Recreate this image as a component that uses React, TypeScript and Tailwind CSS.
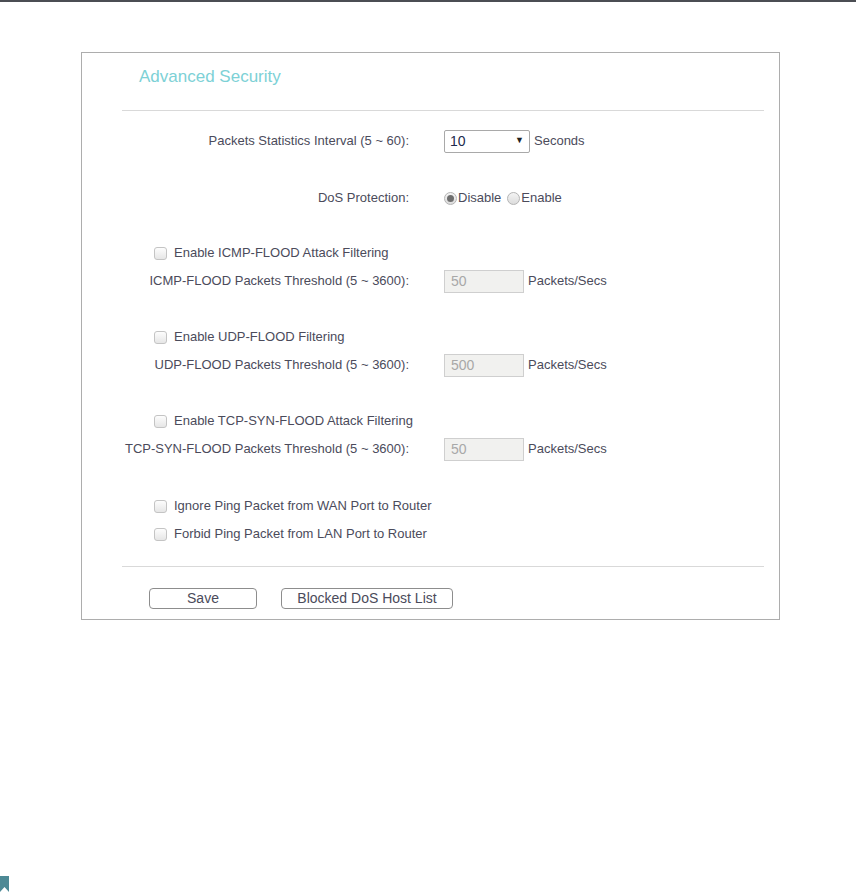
const FONT = { fontFamily: '"Liberation Sans", Arial, sans-serif' };

const Checkbox = () => (
  <span className="inline-block w-[13px] h-[13px] rounded-[3px] border border-[#c4c4c4] bg-gradient-to-b from-[#fdfdfd] to-[#e6e6e6]" />
);

const Radio = ({ checked }: { checked?: boolean }) => (
  <span className="inline-flex items-center justify-center w-[13px] h-[13px] rounded-full border border-[#b4b4b4] bg-gradient-to-b from-[#f4f4f4] to-[#dcdcdc]">
    {checked && <span className="w-[7px] h-[7px] rounded-full bg-[#6e6e6e]" />}
  </span>
);

const Row = ({ label, children }: { label: string; children: React.ReactNode }) => (
  <div className="flex items-center h-[28px]">
    <div className="w-[328px] text-right pr-[1px]">{label}</div>
    <div className="ml-[34px] flex items-center">{children}</div>
  </div>
);

const CheckRow = ({ label }: { label: string }) => (
  <div className="flex items-center h-[28px] pl-[72px]">
    <Checkbox />
    <span className="ml-[7px]">{label}</span>
  </div>
);

const Threshold = ({ label, value }: { label: string; value: string }) => (
  <Row label={label}>
    <div className="w-[80px] h-[23px] border border-[#cfcfcf] bg-[#f1f1ef] text-[#a8a8a8] text-[14px] leading-[21px] pl-[6px]">
      {value}
    </div>
    <span className="ml-[4px]">Packets/Secs</span>
  </Row>
);

export default function App() {
  return (
    <div className="w-[856px] h-[892px] bg-white text-[13px] text-[#4b4b5b] overflow-hidden" style={FONT}>
      <div className="h-[2px] bg-[#4b4e53]" />
      <div className="ml-[81px] mt-[50px] w-[699px] h-[568px] border border-[#adadad]">
        <div className="pl-[57px] pt-[14px] text-[17px] leading-[20px] text-[#7dd1d6]">Advanced Security</div>
        <div className="ml-[40px] mt-[23px] w-[642px] h-[1px] bg-[#d9d9d9]" />

        <div className="mt-[16px]">
          <Row label="Packets Statistics Interval (5 ~ 60):">
            <div className="w-[86px] h-[23px] border border-[#a9a9a9] rounded-[2px] flex items-center justify-between pl-[5px] pr-[5px]">
              <span className="text-[14px] text-[#1d2a4d]">10</span>
              <span className="text-[9px] text-[#222]">▼</span>
            </div>
            <span className="ml-[4px]">Seconds</span>
          </Row>
        </div>

        <div className="mt-[29px]">
          <Row label="DoS Protection:">
            <Radio checked />
            <span className="ml-[1px]">Disable</span>
            <span className="ml-[6px]" />
            <Radio />
            <span className="ml-[1px]">Enable</span>
          </Row>
        </div>

        <div className="mt-[27px]">
          <CheckRow label="Enable ICMP-FLOOD Attack Filtering" />
          <Threshold label="ICMP-FLOOD Packets Threshold (5 ~ 3600):" value="50" />
        </div>

        <div className="mt-[28px]">
          <CheckRow label="Enable UDP-FLOOD Filtering" />
          <Threshold label="UDP-FLOOD Packets Threshold (5 ~ 3600):" value="500" />
        </div>

        <div className="mt-[28px]">
          <CheckRow label="Enable TCP-SYN-FLOOD Attack Filtering" />
          <Threshold label="TCP-SYN-FLOOD Packets Threshold (5 ~ 3600):" value="50" />
        </div>

        <div className="mt-[29px]">
          <CheckRow label="Ignore Ping Packet from WAN Port to Router" />
          <CheckRow label="Forbid Ping Packet from LAN Port to Router" />
        </div>

        <div className="ml-[40px] mt-[18px] w-[642px] h-[1px] bg-[#d9d9d9]" />

        <div className="flex gap-[24px] pl-[67px] mt-[21px]">
          <button className="w-[108px] h-[21px] border border-[#8d8d8d] rounded-[4px] bg-white text-[14px] leading-[19px] text-[#4b4b5b]">
            Save
          </button>
          <button className="w-[172px] h-[21px] border border-[#8d8d8d] rounded-[4px] bg-white text-[14px] leading-[19px] text-[#4b4b5b]">
            Blocked DoS Host List
          </button>
        </div>
      </div>

      <svg className="mt-[256px] block" width="9" height="16" viewBox="0 0 9 16">
        <polygon points="0,0 9,0 9,16 4.5,11 0,16" fill="#4d8995" />
      </svg>
    </div>
  );
}
